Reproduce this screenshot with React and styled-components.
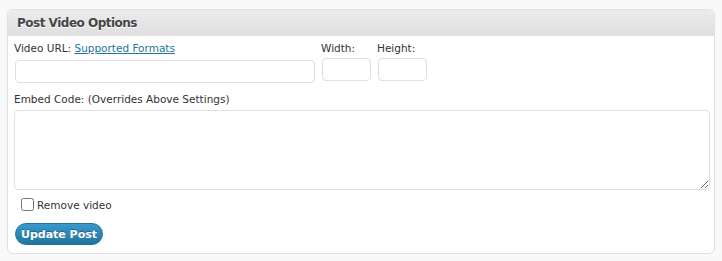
import React from "react";
import styled, { createGlobalStyle } from "styled-components";

const Global = createGlobalStyle`
  html, body { margin: 0; padding: 0; background: #f9f9f9; }
  body { font-family: "DejaVu Sans", "Liberation Sans", sans-serif; color: #333; }
  * { box-sizing: border-box; }
`;

const Page = styled.div`
  padding: 9px 7px 7px 7px;
`;

const Box = styled.section`
  width: 708px;
  background: #fff;
  border: 1px solid #dfdfdf;
  border-radius: 6px;
  overflow: hidden;
`;

const Header = styled.h3`
  margin: 0;
  height: 26px;
  padding: 0 9px;
  display: flex;
  align-items: center;
  font-size: 12px;
  letter-spacing: -0.5px;
  font-weight: bold;
  color: #464646;
  background: linear-gradient(#ececec, #dfdfdf);
  border-bottom: 1px solid #dfdfdf;
  text-shadow: 0 1px 0 #fff;
`;

const Body = styled.div`
  padding: 5px 5px 8px 6px;
  display: flex;
  flex-direction: column;
`;

const TopRow = styled.div`
  display: flex;
  gap: ${(p) => p.$gap || 6}px;
`;

const Field = styled.div`
  display: flex;
  flex-direction: column;
  gap: ${(p) => p.$gap || 4}px;
`;

const Label = styled.label`
  font-size: 10.5px;
  line-height: 14px;
  color: #333;
`;

const Link = styled.a`
  color: #21759b;
  text-decoration: underline;
`;

const Input = styled.input`
  width: ${(p) => p.$w}px;
  height: ${(p) => p.$h || 23}px;
  margin-left: ${(p) => p.$ml || 0}px;
  border: 1px solid #dfdfdf;
  border-radius: 4px;
  background: #fff;
  padding: 2px 4px;
  font: inherit;
  outline: none;
`;

const EmbedBlock = styled.div`
  margin-top: 9px;
  display: flex;
  flex-direction: column;
  gap: 4px;
`;

const TextArea = styled.textarea`
  width: 696px;
  height: 80px;
  border: 1px solid #dfdfdf;
  border-radius: 4px;
  background: #fff;
  font: inherit;
  outline: none;
  resize: both;
  display: block;
`;

const CheckRow = styled.label`
  margin-top: 8px;
  margin-left: 7px;
  display: flex;
  align-items: center;
  gap: 3px;
  font-size: 10.5px;
  color: #333;
`;

const Check = styled.input`
  width: 13px;
  height: 13px;
  margin: 0;
`;

const Button = styled.button`
  margin-top: 12px;
  margin-left: 1px;
  align-self: flex-start;
  width: 88px;
  height: 22px;
  border: 1px solid #21759b;
  border-radius: 11px;
  background: linear-gradient(#3a99cc, #21759b);
  color: #fff;
  font-family: "DejaVu Sans", "Liberation Sans", sans-serif;
  font-size: 11px;
  font-weight: bold;
  text-shadow: 0 -1px 0 rgba(0, 0, 0, 0.3);
  padding: 0;
  cursor: pointer;
`;

export default function App() {
  return (
    <Page>
      <Global />
      <Box>
        <Header>Post Video Options</Header>
        <Body>
          <TopRow>
            <Field $gap={5}>
              <Label>
                Video URL: <Link href="#">Supported Formats</Link>
              </Label>
              <Input $w={300} $h={23} $ml={1} />
            </Field>
            <TopRow $gap={6}>
              <Field $gap={3}>
                <Label>Width:</Label>
                <Input $w={49} $ml={1} />
              </Field>
              <Field $gap={3}>
                <Label>Height:</Label>
                <Input $w={49} $ml={1} />
              </Field>
            </TopRow>
          </TopRow>
          <EmbedBlock>
            <Label>Embed Code: (Overrides Above Settings)</Label>
            <TextArea />
          </EmbedBlock>
          <CheckRow>
            <Check type="checkbox" />
            Remove video
          </CheckRow>
          <Button>Update Post</Button>
        </Body>
      </Box>
    </Page>
  );
}
